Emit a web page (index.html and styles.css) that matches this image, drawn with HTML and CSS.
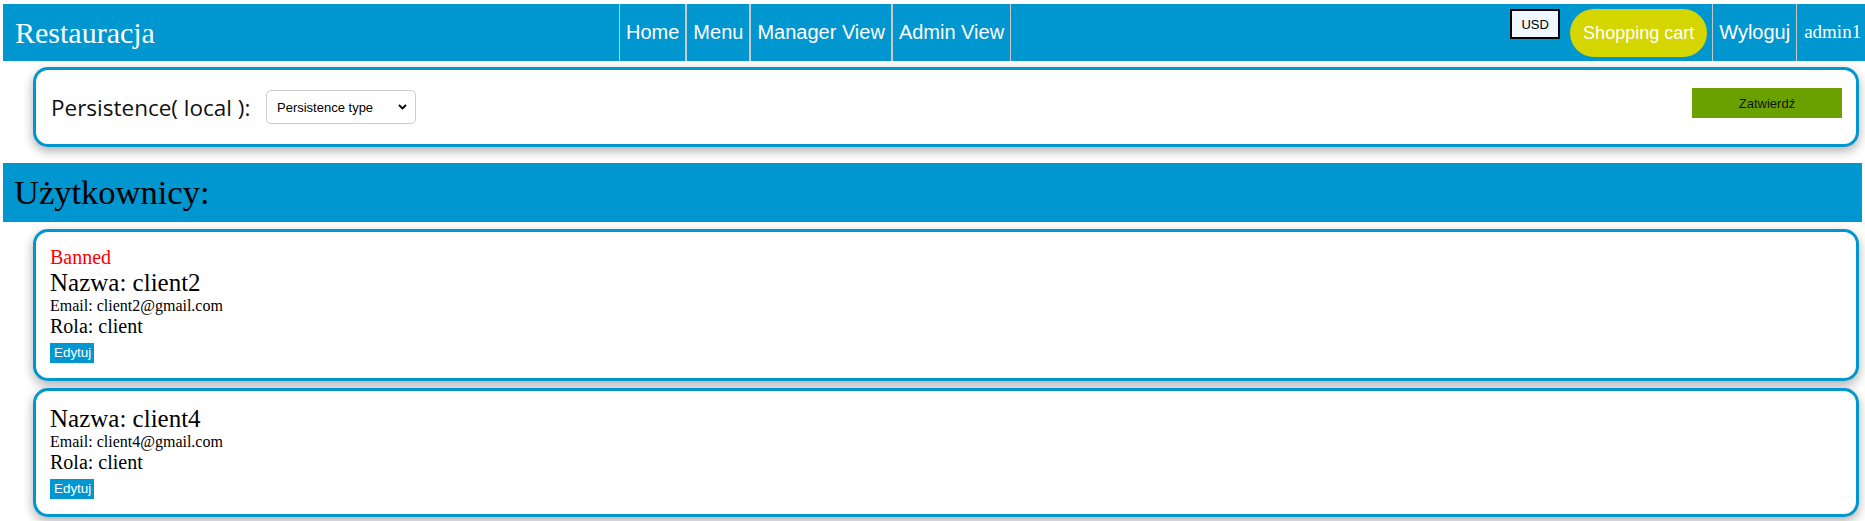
FILE: index.html
```html
<!DOCTYPE html>
<html lang="pl">
<head>
<meta charset="utf-8">
<title>Restauracja</title>
<link rel="stylesheet" href="styles.css">
</head>
<body>
<nav class="navbar">
  <a class="brand">Restauracja</a>
  <div class="nav-links">
    <a class="nav-link">Home</a>
    <a class="nav-link">Menu</a>
    <a class="nav-link">Manager View</a>
    <a class="nav-link">Admin View</a>
  </div>
  <div class="nav-right">
    <button class="currency">USD</button>
    <button class="cart">Shopping cart</button>
    <a class="nav-link">Wyloguj</a>
    <span class="user">admin1</span>
  </div>
</nav>
<main class="content">
  <section class="card settings">
    <label class="settings-label">Persistence( local ):</label>
    <div class="select">
      <span class="select-text">Persistence type</span>
      <svg class="chevron" width="9" height="6" viewBox="0 0 9 6"><path d="M1 1 L4.5 4.5 L8 1" fill="none" stroke="#000" stroke-width="1.8"/></svg>
    </div>
    <button class="confirm">Zatwierdź</button>
  </section>
  <h2 class="section-title">Użytkownicy:</h2>
  <div class="card user-card">
    <div class="banned">Banned</div>
    <div class="user-name">Nazwa: client2</div>
    <div class="user-email">Email: client2@gmail.com</div>
    <div class="user-role">Rola: client</div>
    <button class="edit">Edytuj</button>
  </div>
  <div class="card user-card">
    <div class="user-name">Nazwa: client4</div>
    <div class="user-email">Email: client4@gmail.com</div>
    <div class="user-role">Rola: client</div>
    <button class="edit">Edytuj</button>
  </div>
</main>
</body>
</html>
```
FILE: styles.css
```css
html, body {
  overflow: hidden;
}
body {
  margin: 4px 0 0 3px;
  background: #ffffff;
  font-family: "Liberation Serif", "Times New Roman", serif;
  color: #000;
}

.navbar {
  display: flex;
  align-items: flex-start;
  height: 57px;
  background: #0096cf;
  overflow: hidden;
  white-space: nowrap;
}
.brand {
  flex: 0 0 auto;
  width: 604px;
  padding-left: 12px;
  font-family: "Liberation Serif", serif;
  font-size: 30px;
  line-height: 57px;
  color: #fff;
}
.nav-links {
  display: flex;
  flex: 0 0 auto;
}
.nav-link {
  flex: 0 0 auto;
  padding: 0 6px;
  border-left: 1px solid #c9c9c9;
  border-right: 1px solid #c9c9c9;
  font-family: "Liberation Sans", Arial, sans-serif;
  font-size: 20px;
  line-height: 57px;
  color: #fff;
}
.nav-right {
  display: flex;
  align-items: flex-start;
  flex: 0 0 auto;
  margin-left: 499px;
}
.currency {
  flex: 0 0 auto;
  width: 50px;
  height: 30px;
  margin-top: 5px;
  padding: 0;
  border: 2px solid #000;
  background: #eef6ff;
  font-family: "Liberation Sans", Arial, sans-serif;
  font-size: 13px;
  color: #000;
}
.cart {
  flex: 0 0 auto;
  height: 48px;
  margin: 5px 5px 0 10px;
  padding: 0 13px;
  border: none;
  border-radius: 24px;
  background: #d5d500;
  font-family: "Liberation Sans", Arial, sans-serif;
  font-size: 18px;
  color: #fff;
}
.user {
  flex: 0 0 auto;
  padding-left: 7px;
  font-family: "Liberation Serif", serif;
  font-size: 19px;
  line-height: 55px;
  color: #fff;
}

.content {
  margin-right: 3px;
}
.card {
  margin: 0 3px 0 30px;
  border: 3px solid #0096cf;
  border-radius: 15px;
  background: #fff;
  box-shadow: 0 4px 11px rgba(0, 0, 0, 0.32);
}
.settings {
  display: flex;
  align-items: center;
  height: 74px;
  margin-top: 6px;
  padding: 0 14px 0 15px;
}
.settings-label {
  flex: 0 0 auto;
  width: 215px;
  font-family: "Open Sans", sans-serif;
  font-size: 22.5px;
  color: #111;
}
.select {
  display: flex;
  align-items: center;
  justify-content: space-between;
  box-sizing: border-box;
  width: 150px;
  height: 34px;
  padding: 0 8px 0 10px;
  border: 1px solid #cccccc;
  border-radius: 5px;
  background: #fff;
  font-family: "Liberation Sans", Arial, sans-serif;
  font-size: 13px;
  color: #000;
}
.chevron {
  display: block;
}
.confirm {
  align-self: flex-start;
  width: 150px;
  height: 30px;
  margin: 18px 0 0 auto;
  padding: 0;
  border: none;
  background: #6aa100;
  font-family: "Liberation Sans", Arial, sans-serif;
  font-size: 13px;
  color: #111;
}

.section-title {
  margin: 16px 0 7px 0;
  height: 59px;
  padding-left: 11px;
  background: #0096cf;
  font-family: "Liberation Serif", serif;
  font-size: 34.5px;
  font-weight: normal;
  line-height: 59px;
  color: #000;
}

.user-card {
  margin-bottom: 7px;
  padding: 14px 14px 15px 14px;
}
.banned {
  font-size: 20px;
  line-height: 23px;
  color: #ff0000;
}
.user-name {
  font-size: 25px;
  line-height: 28px;
}
.user-email {
  font-size: 16px;
  line-height: 18px;
}
.user-role {
  font-size: 20px;
  line-height: 22px;
}
.edit {
  display: block;
  height: 20px;
  margin-top: 6px;
  padding: 0 3px 0 4px;
  border: none;
  background: #0096cf;
  font-family: "Liberation Sans", Arial, sans-serif;
  font-size: 13.4px;
  line-height: 20px;
  color: #fff;
}
```
